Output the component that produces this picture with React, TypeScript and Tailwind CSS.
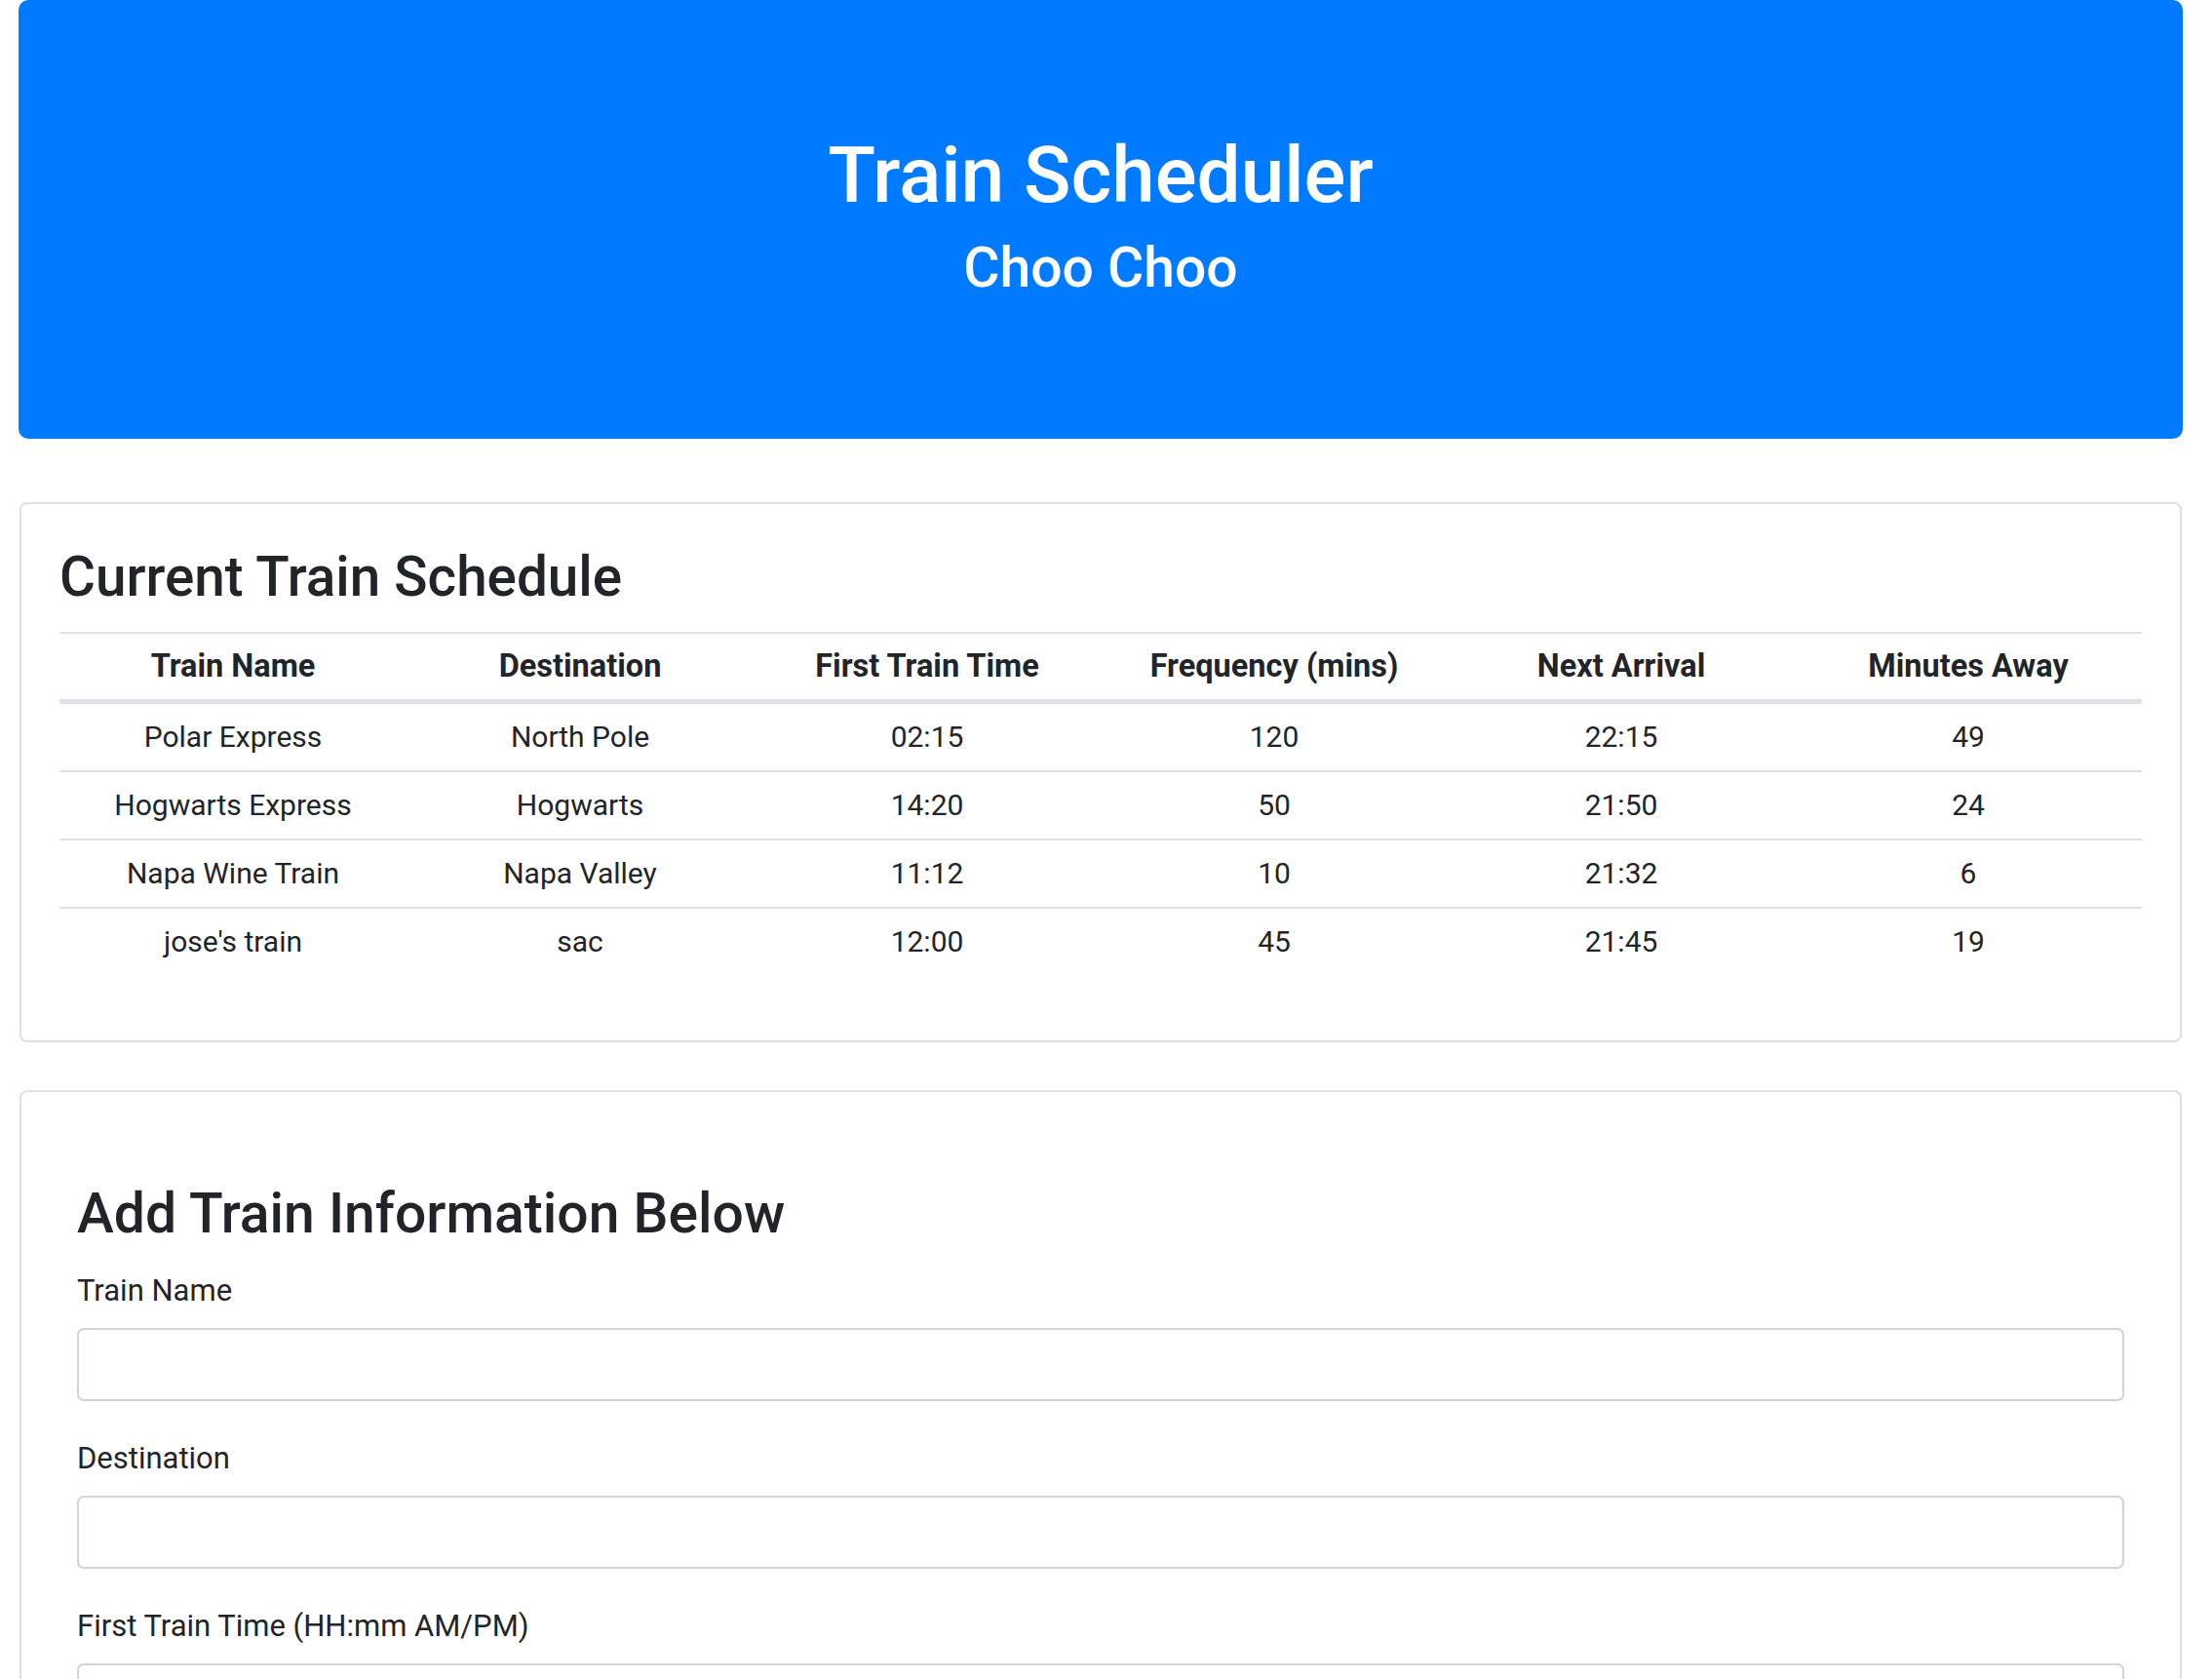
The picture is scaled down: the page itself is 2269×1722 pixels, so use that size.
import React from 'react'

interface ITrain {
  name: string
  destination: string
  firstTime: string
  frequency: number
  nextArrival: string
  minutesAway: number
}

const trains: ITrain[] = [
  { name: 'Polar Express', destination: 'North Pole', firstTime: '02:15', frequency: 120, nextArrival: '22:15', minutesAway: 49 },
  { name: 'Hogwarts Express', destination: 'Hogwarts', firstTime: '14:20', frequency: 50, nextArrival: '21:50', minutesAway: 24 },
  { name: 'Napa Wine Train', destination: 'Napa Valley', firstTime: '11:12', frequency: 10, nextArrival: '21:32', minutesAway: 6 },
  { name: "jose's train", destination: 'sac', firstTime: '12:00', frequency: 45, nextArrival: '21:45', minutesAway: 19 },
]

const columns = ['Train Name', 'Destination', 'First Train Time', 'Frequency (mins)', 'Next Arrival', 'Minutes Away']

const fields = [
  { id: 'train-name', label: 'Train Name' },
  { id: 'destination', label: 'Destination' },
  { id: 'first-train', label: 'First Train Time (HH:mm AM/PM)' },
]

function Field({ id, label }: { id: string; label: string }) {
  return (
    <div className="mb-[36px] flex flex-col">
      <label htmlFor={id} className="text-[31px] leading-[45px]">
        {label}
      </label>
      <input
        id={id}
        type="text"
        className="mt-[16px] h-[75px] w-full rounded-[7px] border-2 border-[#ced4da] bg-white px-[18px] text-[30px] outline-none"
      />
    </div>
  )
}

export default function App() {
  return (
    <div
      className="min-h-screen bg-white pl-[19px] pr-[30px] text-[#212529]"
      style={{ fontFamily: 'Roboto, "Open Sans", sans-serif' }}
    >
      {/* Jumbotron */}
      <div className="flex h-[450px] flex-col items-center rounded-[10px] bg-[#007bff] pt-[132px] text-white">
        <h1 className="text-[80px] font-medium leading-[96px]">Train Scheduler</h1>
        <h3 className="mt-[15px] text-[57px] font-medium leading-[64px]">Choo Choo</h3>
      </div>

      {/* Schedule */}
      <div className="mx-px mt-[65px] rounded-[8px] border-2 border-[#dfdfdf] px-[39px] pb-[67px] pt-[39px]">
        <h2 className="text-[56.6px] font-medium leading-[72px]">Current Train Schedule</h2>
        <table className="mt-[20px] w-full table-fixed border-separate border-spacing-0 text-center">
          <thead>
            <tr>
              {columns.map((c) => (
                <th
                  key={c}
                  className="border-t-2 border-b-[3px] border-[#dee2e6] p-0 text-[32.5px] font-bold leading-[67px]"
                >
                  {c}
                </th>
              ))}
            </tr>
          </thead>
          <tbody>
            {trains.map((t) => (
              <tr key={t.name}>
                {[t.name, t.destination, t.firstTime, t.frequency, t.nextArrival, t.minutesAway].map((v, i) => (
                  <td key={i} className="border-t-2 border-[#dee2e6] p-0 text-[30px] leading-[68px]">
                    {v}
                  </td>
                ))}
              </tr>
            ))}
          </tbody>
        </table>
      </div>

      {/* Add train form */}
      <div className="mx-px mt-[49px] rounded-[8px] border-2 border-[#dfdfdf] px-[57px] pb-[60px] pt-[89px]">
        <h2 className="text-[57px] font-medium leading-[72px]">Add Train Information Below</h2>
        <form className="mt-[20px]" onSubmit={(e) => e.preventDefault()}>
          {fields.map((f) => (
            <Field key={f.id} id={f.id} label={f.label} />
          ))}
        </form>
      </div>
    </div>
  )
}
